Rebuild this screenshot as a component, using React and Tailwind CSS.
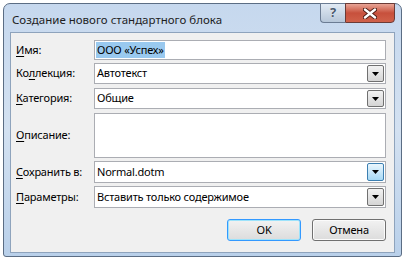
import React from 'react';

const font = { fontFamily: '"Noto Sans", "Open Sans", sans-serif' };

function Arrow() {
  return (
    <svg width="7" height="4" viewBox="0 0 7 4">
      <polygon points="0,0 7,0 3.5,4" fill="#000" />
    </svg>
  );
}

function Combo({ value, hot }) {
  return (
    <div className="flex-1 h-full flex items-center bg-white border border-[#abadb3] pl-[2px] pr-[1px]">
      <span className="flex-1">{value}</span>
      <div
        className={
          hot
            ? 'w-[17px] h-[calc(100%-2px)] flex items-center justify-center border border-[#3c7fb1] rounded-[2px] bg-gradient-to-b from-[#eaf6fd] to-[#a7d9f5]'
            : 'w-[17px] h-[calc(100%-2px)] flex items-center justify-center border border-[#707070] rounded-[2px] bg-gradient-to-b from-[#f2f2f2] to-[#d5d5d5]'
        }
      >
        <Arrow />
      </div>
    </div>
  );
}

function Row({ label, h, children }) {
  return (
    <div className="flex items-center" style={{ height: h }}>
      <div className="w-[78px] shrink-0">{label}</div>
      {children}
    </div>
  );
}

export default function App() {
  return (
    <div className="w-[405px] h-[260px] bg-white pt-[3px] pl-[3px] text-[11px] tracking-[-0.2px] text-black" style={font}>
      <div className="w-[399px] h-[254px] rounded-t-[7px] rounded-b-[3px] border border-[#5b6d84] bg-gradient-to-b from-[#c6d8ee] via-[#d3e1f1] to-[#b9d0ea] flex flex-col px-[6px] pb-[3px]">
        <div className="h-[28px] shrink-0 flex items-start">
          <div className="flex-1 pt-[7px] pl-[2px] text-[11.5px] tracking-normal text-[#1e1e1e]">Создание нового стандартного блока</div>
          <div className="flex h-[20px] -mt-[1px]">
            <div className="w-[25px] border border-[#6b7c93] border-r-0 rounded-bl-[4px] bg-gradient-to-b from-[#e2ebf5] to-[#b7c7d9] flex items-center justify-center text-[13px] font-bold text-[#4a5a6e]" style={{ textShadow: '0 0 1px #fff' }}>?</div>
            <div className="w-[50px] border border-[#6b3b36] rounded-br-[4px] bg-gradient-to-b from-[#e8a496] via-[#c7503c] to-[#d0614a] flex items-center justify-center">
              <svg width="14" height="11" viewBox="0 0 14 11">
                <path d="M2 1.5 L12 9.5 M12 1.5 L2 9.5" stroke="#4a1a12" strokeWidth="4.2" strokeLinecap="round" />
                <path d="M2 1.5 L12 9.5 M12 1.5 L2 9.5" stroke="#fff" strokeWidth="2.4" strokeLinecap="round" />
              </svg>
            </div>
          </div>
        </div>
        <div className="flex-1 border border-[#8ea3bc] bg-[#f0f0f0] pt-[7px] pl-[5px] pr-[8px] flex flex-col">
          <Row label={<span><u className="underline-offset-2">И</u>мя:</span>} h={20}>
            <div className="flex-1 h-full flex items-center bg-white border border-[#abadb3] pl-[1px]">
              <span className="bg-[#99c9ef] px-[1px]">ООО «Успех»</span>
            </div>
          </Row>
          <div className="h-[3px]" />
          <Row label={<span>Ко<u className="underline-offset-2">л</u>лекция:</span>} h={21}>
            <Combo value="Автотекст" />
          </Row>
          <div className="h-[4px]" />
          <Row label={<span><u className="underline-offset-2">К</u>атегория:</span>} h={21}>
            <Combo value="Общие" />
          </Row>
          <div className="h-[4px]" />
          <Row label={<span><u className="underline-offset-2">О</u>писание:</span>} h={45}>
            <div className="flex-1 h-full bg-white border border-[#abadb3]" />
          </Row>
          <div className="h-[3px]" />
          <Row label={<span><u className="underline-offset-2">С</u>охранить в:</span>} h={22}>
            <Combo value="Normal.dotm" hot />
          </Row>
          <div className="h-[3px]" />
          <Row label={<span><u className="underline-offset-2">П</u>араметры:</span>} h={22}>
            <Combo value="Вставить только содержимое" />
          </Row>
          <div className="flex justify-end gap-[11px] mt-[11px]">
            <button className="w-[74px] h-[22px] rounded-[3px] border border-[#3399ff] bg-gradient-to-b from-[#f2f2f2] to-[#dcdcdc] shadow-[inset_0_0_0_1px_#9de3fb]">OK</button>
            <button className="w-[74px] h-[22px] rounded-[3px] border border-[#707070] bg-gradient-to-b from-[#f2f2f2] to-[#dcdcdc] shadow-[inset_0_0_0_1px_#fbfbfb]">Отмена</button>
          </div>
        </div>
      </div>
    </div>
  );
}
